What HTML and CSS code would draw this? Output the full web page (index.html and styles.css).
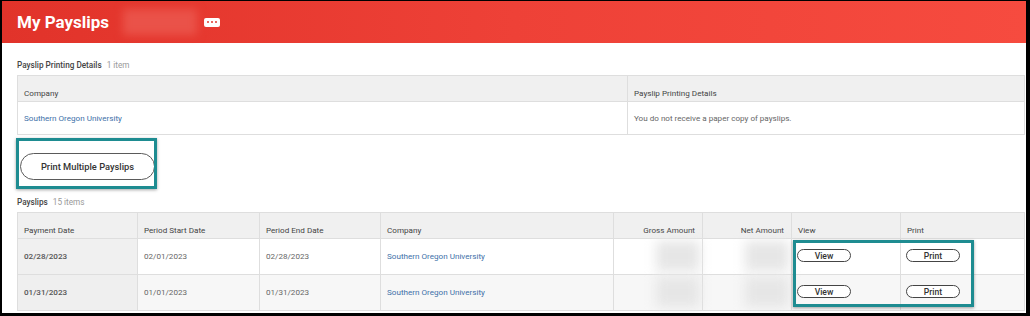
FILE: index.html
```html
<!DOCTYPE html>
<html>
<head>
<meta charset="utf-8">
<link rel="stylesheet" href="styles.css">
</head>
<body>
<div class="page">
  <header class="topbar">
    <h1 class="title">My Payslips</h1>
    <div class="blur-name"></div>
    <div class="more-btn"><span></span><span></span><span></span></div>
  </header>

  <div class="content">
    <div class="sec-title">Payslip Printing Details <span class="count">1 item</span></div>
    <table class="grid grid-details">
      <colgroup><col class="c-dc"><col></colgroup>
      <thead>
        <tr><th>Company</th><th>Payslip Printing Details</th></tr>
      </thead>
      <tbody>
        <tr><td><a class="link">Southern Oregon University</a></td><td>You do not receive a paper copy of payslips.</td></tr>
      </tbody>
    </table>

    <div class="btn-area">
      <button class="pill-btn">Print Multiple Payslips</button>
      <div class="hl hl-btn"></div>
    </div>

    <div class="sec-title sec2">Payslips <span class="count">15 items</span></div>
    <div class="table-wrap">
      <table class="grid grid-slips">
        <colgroup>
          <col class="w1"><col class="w2"><col class="w3"><col class="w4"><col class="w5"><col class="w6"><col class="w7"><col>
        </colgroup>
        <thead>
          <tr>
            <th>Payment Date</th><th>Period Start Date</th><th>Period End Date</th><th>Company</th>
            <th class="num">Gross Amount</th><th class="num">Net Amount</th><th>View</th><th>Print</th>
          </tr>
        </thead>
        <tbody>
          <tr>
            <td class="first">02/28/2023</td><td>02/01/2023</td><td>02/28/2023</td>
            <td><a class="link">Southern Oregon University</a></td>
            <td class="num"><span class="blurred"></span></td><td class="num"><span class="blurred"></span></td>
            <td><button class="small-pill">View</button></td><td><button class="small-pill">Print</button></td>
          </tr>
          <tr class="alt">
            <td class="first">01/31/2023</td><td>01/01/2023</td><td>01/31/2023</td>
            <td><a class="link">Southern Oregon University</a></td>
            <td class="num"><span class="blurred"></span></td><td class="num"><span class="blurred"></span></td>
            <td><button class="small-pill">View</button></td><td><button class="small-pill">Print</button></td>
          </tr>
        </tbody>
      </table>
      <div class="hl hl-rows"></div>
    </div>
  </div>
</div>
</body>
</html>
```

FILE: styles.css
```css
* { box-sizing: border-box; }
html, body { margin: 0; }
body {
  background: #000;
  padding: 1px 4px 3px 2px;
  height: 316px;
  overflow: hidden;
  font-family: Roboto, "Liberation Sans", sans-serif;
}
.page {
  background: #fff;
  height: 100%;
  overflow: hidden;
}
.topbar {
  height: 42px;
  background: linear-gradient(90deg, #e1332a 0%, #ee4137 50%, #f64b3f 100%);
  display: flex;
  align-items: center;
  padding-left: 15px;
}
.title {
  margin: 0;
  color: #fff;
  font-size: 17px;
  font-weight: 700;
  line-height: 20px;
}
.blur-name {
  width: 74px;
  height: 26px;
  margin-left: 14px;
  background: #ea5249;
  filter: blur(4px);
}
.more-btn {
  width: 16px;
  height: 9px;
  margin-left: 7px;
  background: #fff;
  border-radius: 2px;
  display: flex;
  align-items: center;
  justify-content: center;
  gap: 1.5px;
}
.more-btn span {
  width: 2.5px;
  height: 2.5px;
  border-radius: 50%;
  background: #e0392f;
}
.content {
  padding: 0 1px 0 15px;
}
.sec-title {
  margin: 16px 0 4px;
  height: 12px;
  line-height: 12px;
  font-size: 8.2px;
  font-weight: 500;
  color: #444;
}
.count {
  color: #999;
  font-weight: 400;
  margin-left: 3px;
}
.grid {
  width: 100%;
  border-collapse: collapse;
  table-layout: fixed;
  font-size: 8.1px;
  color: #666;
}
.grid th, .grid td {
  border: 1px solid #dedede;
  text-align: left;
  padding: 0 6px;
  white-space: nowrap;
  overflow: hidden;
}
.grid th {
  background: #f0f0f0;
  color: #444;
  font-weight: 400;
  height: 26px;
  padding-top: 9px;
  line-height: 12px;
}
.grid-details td {
  height: 33px;
  padding-bottom: 1px;
}
.c-dc { width: 610px; }
.link { color: #3d6fa8; text-decoration: none; }

.btn-area {
  position: relative;
  padding: 18px 0 16px 3px;
}
.pill-btn {
  display: block;
  width: 135px;
  height: 27px;
  border: 1px solid #5a5a5a;
  border-radius: 14px;
  background: #fff;
  font-family: Roboto, "Liberation Sans", sans-serif;
  font-size: 9.3px;
  font-weight: 500;
  color: #333;
  padding: 0;
}
.hl {
  position: absolute;
  border: 3px solid #1e8c91;
  box-shadow: 0 1px 3px rgba(0,0,0,0.35);
  pointer-events: none;
}
.hl-btn {
  left: -1px;
  top: 3px;
  width: 141px;
  height: 51px;
}
.sec2 { margin-top: 0; }

.table-wrap { position: relative; }
.grid-slips td {
  height: 36px;
  padding-bottom: 2px;
}
.grid-slips .first {
  background: #f0f0f0;
  font-weight: 500;
  color: #555;
}
.grid-slips tr.alt td { background: #f7f7f7; }
.grid-slips tr.alt td.first { background: #efefef; }
.grid-slips th.num { text-align: right; padding-right: 7px; }
.grid-slips td.num { text-align: right; padding-right: 2px; overflow: visible; }
.w1 { width: 120px; }
.w2 { width: 122px; }
.w3 { width: 121px; }
.w4 { width: 233px; }
.w5 { width: 89px; }
.w6 { width: 89px; }
.w7 { width: 109px; }
.blurred {
  display: inline-block;
  width: 44px;
  height: 30px;
  background: #e6e6e6;
  filter: blur(6px);
  vertical-align: middle;
}
.small-pill {
  display: block;
  width: 54px;
  height: 13px;
  margin-left: -1px;
  border: 1.5px solid #444;
  border-radius: 7px;
  background: #fff;
  font-family: Roboto, "Liberation Sans", sans-serif;
  font-size: 8.6px;
  font-weight: 500;
  color: #333;
  padding: 0;
  line-height: 10px;
}
.hl-rows {
  left: 776px;
  top: 28px;
  width: 181px;
  height: 67px;
}
```
